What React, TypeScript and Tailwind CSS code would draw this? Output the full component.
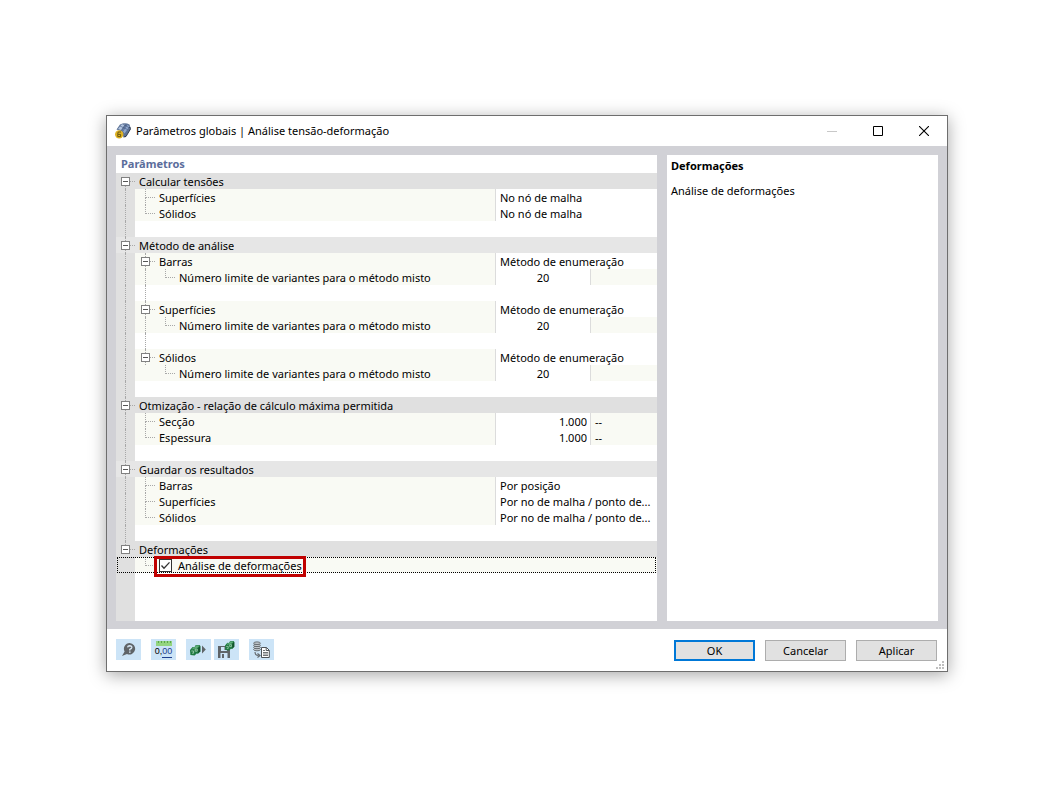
import React, { useState } from 'react';

type ValueKind = 'select' | 'number' | 'unit' | 'check';

interface Param {
  label: string;
  value: string;
  kind: ValueKind;
  unit?: string;
  children?: Param[];
}

interface Group {
  title: string;
  params: Param[];
}

const LIMIT: Param = { label: 'Número limite de variantes para o método misto', value: '20', kind: 'number' };

const GROUPS: Group[] = [
  {
    title: 'Calcular tensões',
    params: [
      { label: 'Superfícies', value: 'No nó de malha', kind: 'select' },
      { label: 'Sólidos', value: 'No nó de malha', kind: 'select' },
    ],
  },
  {
    title: 'Método de análise',
    params: [
      { label: 'Barras', value: 'Método de enumeração', kind: 'select', children: [LIMIT] },
      { label: 'Superfícies', value: 'Método de enumeração', kind: 'select', children: [LIMIT] },
      { label: 'Sólidos', value: 'Método de enumeração', kind: 'select', children: [LIMIT] },
    ],
  },
  {
    title: 'Otmização - relação de cálculo máxima permitida',
    params: [
      { label: 'Secção', value: '1.000', kind: 'unit', unit: '--' },
      { label: 'Espessura', value: '1.000', kind: 'unit', unit: '--' },
    ],
  },
  {
    title: 'Guardar os resultados',
    params: [
      { label: 'Barras', value: 'Por posição', kind: 'select' },
      { label: 'Superfícies', value: 'Por no de malha / ponto de...', kind: 'select' },
      { label: 'Sólidos', value: 'Por no de malha / ponto de...', kind: 'select' },
    ],
  },
  {
    title: 'Deformações',
    params: [{ label: 'Análise de deformações', value: '', kind: 'check' }],
  },
];

// Dotted tree line that ends in a branch to the right
const Branch: React.FC<{ more?: boolean }> = ({ more }) => (
  <span className="flex w-5 shrink-0 flex-col pl-[10px]">
    <span className="h-[9px] border-b border-l border-dotted border-[#a8a8a8]" />
    {more && <span className="h-[7px] border-l border-dotted border-[#a8a8a8]" />}
  </span>
);

// Dotted tree line that only passes through the row
const Pass: React.FC<{ on?: boolean }> = ({ on }) => (
  <span className="flex w-5 shrink-0 pl-[10px]">{on && <span className="border-l border-dotted border-[#a8a8a8]" />}</span>
);

const Gutter: React.FC<{ on?: boolean }> = ({ on }) => (
  <span className="flex w-[19px] shrink-0 bg-[#e0e0e0] pl-[9px]">
    {on && <span className="border-l border-dotted border-[#a8a8a8]" />}
  </span>
);

interface ToggleProps {
  label: string;
  above?: boolean;
  below?: boolean;
}

const Toggle: React.FC<ToggleProps> = ({ label, above, below }) => (
  <span className="flex shrink-0">
    <span className="flex w-[9px] flex-col">
      <span className="flex h-1 pl-1">{above && <span className="border-l border-dotted border-[#a8a8a8]" />}</span>
      <button
        type="button"
        aria-label={`Recolher ${label}`}
        className="flex h-[9px] w-[9px] items-center justify-center border border-[#808080] bg-white"
      >
        <span className="h-px w-[5px] bg-[#555555]" />
      </button>
      <span className="flex h-[3px] pl-1">{below && <span className="border-l border-dotted border-[#a8a8a8]" />}</span>
    </span>
    <span className="h-[9px] w-[5px] border-b border-dotted border-[#a8a8a8]" />
  </span>
);

const Value: React.FC<{ param: Param; id: string }> = ({ param, id }) => {
  if (param.kind === 'select') {
    return (
      <select id={id} className="h-4 w-full appearance-none overflow-hidden bg-white pt-px pl-1 leading-4 outline-none">
        <option>{param.value}</option>
      </select>
    );
  }
  return (
    <>
      <input
        id={id}
        defaultValue={param.value}
        className={`h-4 w-[94px] shrink-0 bg-white pt-[2px] pr-[3px] leading-4 outline-none ${
          param.kind === 'number' ? 'pl-[3px] text-center' : 'text-right'
        }`}
      />
      <span className="flex-1 border-l border-[#dcdcdc] bg-[#f9faf4] pl-1">{param.unit}</span>
    </>
  );
};

interface RowProps {
  param: Param;
  id: string;
  last: boolean;
  gutter: boolean;
}

const ParamRow: React.FC<RowProps> = ({ param, id, last, gutter }) => (
  <>
    <div className="flex h-4">
      <Gutter on={gutter} />
      <div className="flex min-w-0 flex-1 bg-[#f9faf4]">
        {param.children ? (
          <span className="flex w-5 shrink-0 pl-[6px]">
            <Toggle label={param.label} above below />
          </span>
        ) : (
          <Branch more={!last} />
        )}
        <label htmlFor={id} className="truncate pl-1">
          {param.label}
        </label>
      </div>
      <div className="flex w-[162px] shrink-0 border-l border-[#dcdcdc]">
        <Value param={param} id={id} />
      </div>
    </div>
    {param.children?.map((child, i) => (
      <div key={child.label} className="flex h-4">
        <Gutter on={gutter} />
        <div className="flex min-w-0 flex-1 bg-[#f9faf4]">
          <Pass on={!last} />
          <Branch />
          <label htmlFor={`${id}-${i}`} className="truncate pl-1">
            {child.label}
          </label>
        </div>
        <div className="flex w-[162px] shrink-0 border-l border-[#dcdcdc]">
          <Value param={child} id={`${id}-${i}`} />
        </div>
      </div>
    ))}
    {param.children && !last && (
      <div className="flex h-4">
        <Gutter on={gutter} />
        <Pass on />
      </div>
    )}
  </>
);

const CheckRow: React.FC<{ param: Param; id: string }> = ({ param, id }) => {
  const [checked, setChecked] = useState(true);
  return (
    <div className="relative flex h-4">
      <Gutter />
      <div className="flex flex-1 items-start bg-[#f9faf4]">
        <Branch />
        <span className="grid pt-[2px] pl-1">
          <input
            id={id}
            type="checkbox"
            checked={checked}
            onChange={(e) => setChecked(e.target.checked)}
            className="col-start-1 row-start-1 h-[13px] w-[13px] appearance-none border border-[#333333] bg-white"
          />
          {checked && (
            <svg viewBox="0 0 13 13" className="pointer-events-none col-start-1 row-start-1 h-[13px] w-[13px]">
              <path d="M2.5 6.5 L5 9.2 L10.5 3.4" fill="none" stroke="#333" strokeWidth="1.3" />
            </svg>
          )}
        </span>
        <label htmlFor={id} className="pl-[6px]">
          {param.label}
        </label>
      </div>
      <span className="pointer-events-none absolute inset-x-px inset-y-0 border border-dotted border-black" />
      <span className="pointer-events-none absolute -top-px left-[38px] h-[21px] w-[152px] border-[3px] border-[#c00000]" />
    </div>
  );
};

const ParamGroup: React.FC<{ group: Group; index: number }> = ({ group, index }) => {
  const last = index === GROUPS.length - 1;
  return (
    <section className="leading-[18px]">
      <div className={`flex h-4 pl-[5px] ${index % 2 ? 'bg-[#e6e6e6]' : 'bg-[#e0e0e0]'}`}>
        <Toggle label={group.title} above={index > 0} below={!last} />
        <h3 className="truncate pl-1">{group.title}</h3>
      </div>
      {group.params.map((param, i) =>
        param.kind === 'check' ? (
          <CheckRow key={param.label} param={param} id={`p-${index}-${i}`} />
        ) : (
          <ParamRow
            key={param.label}
            param={param}
            id={`p-${index}-${i}`}
            last={i === group.params.length - 1}
            gutter={!last}
          />
        ),
      )}
      {!last && (
        <div className="flex h-4">
          <Gutter on />
        </div>
      )}
    </section>
  );
};

const AppIcon: React.FC = () => (
  <svg viewBox="0 0 16 16" className="h-4 w-4 shrink-0">
    <path d="M1.5 6.5 L5 1.5 Q10 -0.8 14.5 1.5 L15.8 5.5 L10.5 14 L8 13.5 L7 8.5 Z" fill="#5d7397" />
    <path d="M3 6 L6.5 1.5 L10 1 L6 7 Z" fill="#b4c6e0" />
    <path d="M7.5 7.5 L12 1.8 L14.5 3.2 L9.5 10.5 Z" fill="#8fa7cd" />
    <path d="M5 3 L12.5 6.5 M8 1 L14.5 5 M8 8 L12 2" stroke="#3f5680" strokeWidth="0.6" fill="none" />
    <path d="M8.5 14 L11 13.5 L15.8 5.5 L14.5 4" stroke="#252d3d" strokeWidth="0.9" fill="none" />
    <circle cx="4.2" cy="11.4" r="4.2" fill="#dfb324" />
    <path d="M6 9 H3.2 Q2.4 11.2 2.8 13.6 H5.6 V11.4 H3" fill="none" stroke="#6b5812" strokeWidth="1" />
  </svg>
);

const HelpIcon: React.FC = () => (
  <svg viewBox="0 0 16 16" className="h-4 w-4">
    <path d="M8.6 1 A5.8 5.8 0 1 1 6 12.1 L1 14 L3.6 9.6 A5.8 5.8 0 0 1 8.6 1 Z" fill="#5f6468" />
    <path d="M6.6 5.4 Q6.8 3.7 8.8 3.7 Q10.9 3.8 10.8 5.4 Q10.7 6.5 8.8 7.4 V8.4" fill="none" stroke="#d6e6f3" strokeWidth="1.4" />
    <path d="M8 9.4 h1.6 v1.4 h-1.6 z" fill="#d6e6f3" />
  </svg>
);

const UnitsIcon: React.FC = () => (
  <span className="flex flex-col items-center">
    <svg viewBox="0 0 16 5" className="h-[5px] w-4">
      <path d="M0 0 H16 V5 H0 Z" fill="#93d47f" />
      <path d="M2.5 0 V2 M5.5 0 V2 M8.5 0 V2 M11.5 0 V2 M14.5 0 V2" stroke="#5aa54a" />
    </svg>
    <span className="flex font-['Liberation_Sans',sans-serif] text-[9px] leading-[11px] text-black">
      0,<span className="border-b border-[#1f3f8f] text-[#1f3f8f]">00</span>
    </span>
  </span>
);

const Cube: React.FC = () => (
  <>
    <path d="M0 5 L2.6 2 L4.5 2.2 L5.5 0.3 L9.6 0 L10.4 1 V6.4 L8 8.8 L6.6 8.6 L4.6 10.6 L0.4 10 Z" fill="#207a42" />
    <path d="M2.8 2.4 L4.6 2.6 L5.8 0.7 L9.4 0.5 L8 2.6 L2.2 4.4 Z" fill="#5fae79" />
    <path d="M8.2 3 L10.2 1.2 V6.2 L8.2 8.2 Z" fill="#14522c" />
    <path d="M1.3 6 H3.6 V8.2 H2 M5.2 4 H7.2 V6.2 H5.2 Z" fill="none" stroke="#a9d6b8" strokeWidth="0.8" />
  </>
);

const LoadDefaultsIcon: React.FC = () => (
  <svg viewBox="0 0 17 16" className="h-4 w-[17px]">
    <g transform="translate(0 3)">
      <Cube />
    </g>
    <path d="M12 3.5 L15.8 7.5 L12 11.5 Z" fill="#5f6468" />
  </svg>
);

const SaveDefaultsIcon: React.FC = () => (
  <svg viewBox="0 0 17 17" className="h-[17px] w-[17px]">
    <path d="M0 5 H10 L12 7 V17 H0 Z" fill="#5f6468" />
    <path d="M3 6 H9 V10 H3 Z M2.5 12 H9.5 V17 H2.5 Z" fill="#cce4f7" />
    <path d="M4 13 H6 V17 H4 Z M6.5 6 H8 V9 H6.5 Z" fill="#5f6468" />
    <g transform="translate(7 0) scale(0.9)">
      <Cube />
    </g>
  </svg>
);

const DatabaseIcon: React.FC = () => (
  <svg viewBox="0 0 17 17" className="h-[17px] w-[17px]">
    <g fill="#c3c9ce" stroke="#5f6468" strokeWidth="0.9">
      <ellipse cx="4" cy="8.5" rx="3.4" ry="1.3" />
      <ellipse cx="4" cy="6.4" rx="3.4" ry="1.3" />
      <ellipse cx="4" cy="4.3" rx="3.4" ry="1.3" />
      <ellipse cx="4" cy="2.2" rx="3.4" ry="1.3" />
    </g>
    <path d="M2 11 Q2 14.5 5.5 14.5 M4.5 12.5 L7 14.5 L4.5 16.5" fill="none" stroke="#5f6468" strokeWidth="1.1" />
    <path d="M8.5 6.5 H13.5 L16.3 9.3 V16.5 H8.5 Z" fill="#fff" stroke="#4d5357" />
    <path d="M13.2 6.5 V9.5 H16" fill="none" stroke="#4d5357" />
    <path d="M10 9.5 H12 M10 11.5 H15 M10 13 H15 M10 14.5 H15" stroke="#4d5357" strokeWidth="0.8" />
  </svg>
);

interface ToolButtonProps {
  label: string;
  children: React.ReactNode;
}

const ToolButton: React.FC<ToolButtonProps> = ({ label, children }) => (
  <button type="button" aria-label={label} className="flex h-[21px] w-[25px] items-center justify-center bg-[#cce4f7]">
    {children}
  </button>
);

const TitleBar: React.FC = () => (
  <header className="flex h-[30px] items-center bg-white pl-2">
    <AppIcon />
    <h1 className="flex-1 truncate pl-[5px]">
      Parâmetros globais | Análise tensão-deformação
    </h1>
    <button type="button" aria-label="Minimizar" disabled className="flex h-full w-[46px] items-center justify-center">
      <svg viewBox="0 0 10 10" className="h-[10px] w-[10px]">
        <path d="M0 5.5 H10" stroke="#c8c8c8" />
      </svg>
    </button>
    <button type="button" aria-label="Maximizar" className="flex h-full w-[46px] items-center justify-center">
      <svg viewBox="0 0 10 10" className="h-[10px] w-[10px]">
        <path d="M0.5 0.5 H9.5 V9.5 H0.5 Z" fill="none" stroke="#000" />
      </svg>
    </button>
    <button type="button" aria-label="Fechar" className="flex h-full w-[46px] items-center justify-center">
      <svg viewBox="0 0 10 10" className="h-[10px] w-[10px]">
        <path d="M0 0 L10 10 M10 0 L0 10" stroke="#000" strokeWidth="1.1" />
      </svg>
    </button>
  </header>
);

const Footer: React.FC = () => (
  <footer className="relative flex h-[42px] items-start justify-between bg-white px-[9px] pt-[10px]">
    <div className="flex gap-[10px]">
      <ToolButton label="Ajuda">
        <HelpIcon />
      </ToolButton>
      <ToolButton label="Unidades e casas decimais">
        <UnitsIcon />
      </ToolButton>
      <div className="flex gap-[3px]">
        <ToolButton label="Carregar predefinições">
          <LoadDefaultsIcon />
        </ToolButton>
        <ToolButton label="Guardar como predefinição">
          <SaveDefaultsIcon />
        </ToolButton>
      </div>
      <ToolButton label="Copiar da base de dados">
        <DatabaseIcon />
      </ToolButton>
    </div>
    <div className="flex gap-[10px] pt-px pr-px">
      <button type="button" className="h-[21px] w-[81px] border-2 border-[#0078d7] bg-[#e1e1e1] leading-4">
        OK
      </button>
      <button type="button" className="h-[21px] w-[81px] border border-[#adadad] bg-[#e1e1e1] leading-4">
        Cancelar
      </button>
      <button type="button" className="h-[21px] w-[81px] border border-[#adadad] bg-[#e1e1e1] leading-4">
        Aplicar
      </button>
    </div>
    <svg viewBox="0 0 8 8" className="absolute right-[3px] bottom-[2px] h-2 w-2">
      <path
        d="M6 0h2v2h-2z M3 3h2v2h-2z M6 3h2v2h-2z M0 6h2v2h-2z M3 6h2v2h-2z M6 6h2v2h-2z"
        fill="#bfbfbf"
      />
    </svg>
  </footer>
);

const App: React.FC = () => {
  return (
    <main className="min-h-screen bg-white pt-[115px] pr-[107px] pb-8 pl-[106px] font-['Noto_Sans','Open_Sans',sans-serif] text-[11px] leading-4 text-black">
      <div
        role="dialog"
        aria-label="Parâmetros globais"
        className="border border-[#6e6e6e] shadow-[0_3px_16px_rgba(0,0,0,0.35)]"
      >
        <TitleBar />
        <div className="flex gap-[10px] bg-[#d1d1d6] px-[9px] pt-[9px] pb-2">
          <div className="flex min-w-0 flex-1 flex-col bg-white">
            <h2 className="h-[18px] pl-[5px] leading-[18px] font-bold text-[#5b6d9b]">Parâmetros</h2>
            {GROUPS.map((group, i) => (
              <ParamGroup key={group.title} group={group} index={i} />
            ))}
            <div className="flex h-12">
              <Gutter />
            </div>
          </div>
          <aside className="w-[271px] shrink-0 bg-white px-1 pt-[3px]">
            <h2 className="font-bold">Deformações</h2>
            <p className="pt-[9px]">Análise de deformações</p>
          </aside>
        </div>
        <Footer />
      </div>
    </main>
  );
};

export default App;
